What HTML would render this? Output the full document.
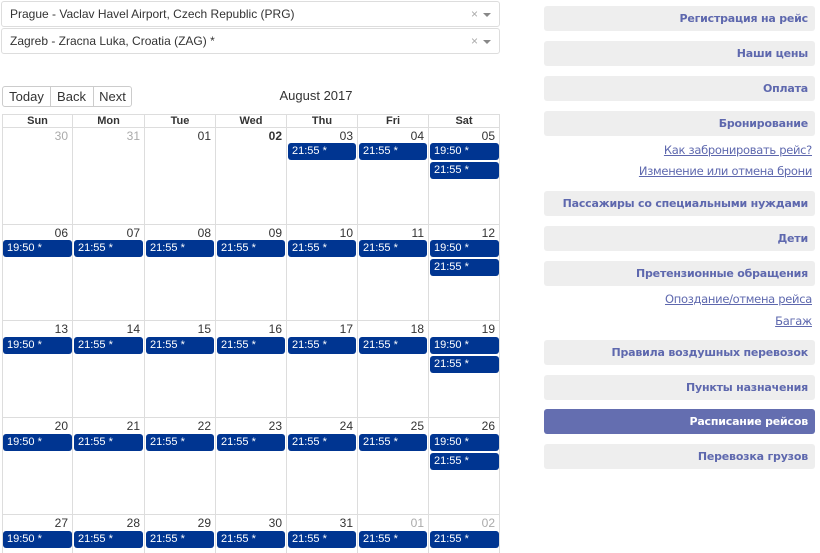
<!DOCTYPE html>
<html><head><meta charset="utf-8"><style>
*{box-sizing:border-box;margin:0;padding:0}
html{width:820px;height:553px;overflow:hidden}
body{width:820px;height:553px;background:#fff;font-family:"Liberation Sans",Arial,sans-serif;position:relative;overflow:hidden;color:#333}
.sel{position:absolute;left:1px;width:499px;height:26px;border:1px solid #ddd;border-radius:3px;font-size:12px;line-height:24px;padding-left:8px;color:#333}
.sel .x{position:absolute;right:21px;top:0;color:#aaa;font-size:12px}
.sel .a{position:absolute;right:8px;top:11px;border-left:4px solid transparent;border-right:4px solid transparent;border-top:4px solid #888}
.tb{position:absolute;top:86px;height:21px;border:1px solid #ccc;font-size:13px;line-height:19px;text-align:center;color:#333}
.title{position:absolute;left:250px;width:132px;top:88px;text-align:center;font-size:13px}
.hd{position:absolute;top:114px;height:14px;font-size:11px;font-weight:bold;text-align:center;line-height:13px;border-right:1px solid #ddd;border-top:1px solid #ddd;border-bottom:1px solid #ddd}
.cell{position:absolute;border-right:1px solid #ddd;border-bottom:1px solid #ddd}
.dn{position:absolute;right:4px;top:1px;font-size:12px;color:#333}
.dn.g{color:#aaa}.dn.b{font-weight:bold}
.ev{position:absolute;height:17px;background:#003591;border-radius:3px;color:#fff;font-size:11px;line-height:17px;padding-left:4px}
.sb{position:absolute;left:544px;width:271px;height:25px;background:#eee;border-radius:3px;text-align:right;padding-right:7px;font-size:11px;font-weight:bold;color:#5e68ae;line-height:25px;font-family:"DejaVu Sans","Liberation Sans",sans-serif;letter-spacing:-0.2px;white-space:nowrap}
.sb.act{background:#646eb0;color:#fff}
.lk{position:absolute;right:8px;font-size:11.5px;color:#5e68ae;text-decoration:underline;font-family:"DejaVu Sans","Liberation Sans",sans-serif;letter-spacing:-0.3px;white-space:nowrap}
</style></head><body>
<div class="sel" style="top:1px">Prague - Vaclav Havel Airport, Czech Republic (PRG)<span class="x">×</span><span class="a"></span></div>
<div class="sel" style="top:28px">Zagreb - Zracna Luka, Croatia (ZAG) *<span class="x">×</span><span class="a"></span></div>
<div class="tb" style="left:2px;width:49px;border-radius:3px 0 0 3px">Today</div>
<div class="tb" style="left:50px;width:44px;border-left:none">Back</div>
<div class="tb" style="left:93px;width:39px;border-radius:0 3px 3px 0">Next</div>
<div class="title">August 2017</div>

<div class="hd" style="left:2px;width:71px;border-left:1px solid #ddd">Sun</div>
<div class="hd" style="left:73px;width:72px">Mon</div>
<div class="hd" style="left:145px;width:71px">Tue</div>
<div class="hd" style="left:216px;width:71px">Wed</div>
<div class="hd" style="left:287px;width:71px">Thu</div>
<div class="hd" style="left:358px;width:71px">Fri</div>
<div class="hd" style="left:429px;width:71px">Sat</div>

<div class="cell" style="left:2px;top:128px;width:71px;height:97px;border-left:1px solid #ddd"><span class="dn g">30</span></div>
<div class="cell" style="left:73px;top:128px;width:72px;height:97px"><span class="dn g">31</span></div>
<div class="cell" style="left:145px;top:128px;width:71px;height:97px"><span class="dn">01</span></div>
<div class="cell" style="left:216px;top:128px;width:71px;height:97px"><span class="dn b">02</span></div>
<div class="cell" style="left:287px;top:128px;width:71px;height:97px"><span class="dn">03</span></div>
<div class="cell" style="left:358px;top:128px;width:71px;height:97px"><span class="dn">04</span></div>
<div class="cell" style="left:429px;top:128px;width:71px;height:97px"><span class="dn">05</span></div>
<div class="ev" style="left:288px;top:143px;width:68px">21:55 *</div>
<div class="ev" style="left:359px;top:143px;width:68px">21:55 *</div>
<div class="ev" style="left:430px;top:143px;width:69px">19:50 *</div>
<div class="ev" style="left:430px;top:162px;width:69px">21:55 *</div>

<div class="cell" style="left:2px;top:225px;width:71px;height:96px;border-left:1px solid #ddd"><span class="dn">06</span></div>
<div class="cell" style="left:73px;top:225px;width:72px;height:96px"><span class="dn">07</span></div>
<div class="cell" style="left:145px;top:225px;width:71px;height:96px"><span class="dn">08</span></div>
<div class="cell" style="left:216px;top:225px;width:71px;height:96px"><span class="dn">09</span></div>
<div class="cell" style="left:287px;top:225px;width:71px;height:96px"><span class="dn">10</span></div>
<div class="cell" style="left:358px;top:225px;width:71px;height:96px"><span class="dn">11</span></div>
<div class="cell" style="left:429px;top:225px;width:71px;height:96px"><span class="dn">12</span></div>
<div class="ev" style="left:3px;top:240px;width:69px">19:50 *</div>
<div class="ev" style="left:74px;top:240px;width:69px">21:55 *</div>
<div class="ev" style="left:146px;top:240px;width:68px">21:55 *</div>
<div class="ev" style="left:217px;top:240px;width:68px">21:55 *</div>
<div class="ev" style="left:288px;top:240px;width:68px">21:55 *</div>
<div class="ev" style="left:359px;top:240px;width:68px">21:55 *</div>
<div class="ev" style="left:430px;top:240px;width:69px">19:50 *</div>
<div class="ev" style="left:430px;top:259px;width:69px">21:55 *</div>

<div class="cell" style="left:2px;top:321px;width:71px;height:97px;border-left:1px solid #ddd"><span class="dn">13</span></div>
<div class="cell" style="left:73px;top:321px;width:72px;height:97px"><span class="dn">14</span></div>
<div class="cell" style="left:145px;top:321px;width:71px;height:97px"><span class="dn">15</span></div>
<div class="cell" style="left:216px;top:321px;width:71px;height:97px"><span class="dn">16</span></div>
<div class="cell" style="left:287px;top:321px;width:71px;height:97px"><span class="dn">17</span></div>
<div class="cell" style="left:358px;top:321px;width:71px;height:97px"><span class="dn">18</span></div>
<div class="cell" style="left:429px;top:321px;width:71px;height:97px"><span class="dn">19</span></div>
<div class="ev" style="left:3px;top:337px;width:69px">19:50 *</div>
<div class="ev" style="left:74px;top:337px;width:69px">21:55 *</div>
<div class="ev" style="left:146px;top:337px;width:68px">21:55 *</div>
<div class="ev" style="left:217px;top:337px;width:68px">21:55 *</div>
<div class="ev" style="left:288px;top:337px;width:68px">21:55 *</div>
<div class="ev" style="left:359px;top:337px;width:68px">21:55 *</div>
<div class="ev" style="left:430px;top:337px;width:69px">19:50 *</div>
<div class="ev" style="left:430px;top:356px;width:69px">21:55 *</div>

<div class="cell" style="left:2px;top:418px;width:71px;height:97px;border-left:1px solid #ddd"><span class="dn">20</span></div>
<div class="cell" style="left:73px;top:418px;width:72px;height:97px"><span class="dn">21</span></div>
<div class="cell" style="left:145px;top:418px;width:71px;height:97px"><span class="dn">22</span></div>
<div class="cell" style="left:216px;top:418px;width:71px;height:97px"><span class="dn">23</span></div>
<div class="cell" style="left:287px;top:418px;width:71px;height:97px"><span class="dn">24</span></div>
<div class="cell" style="left:358px;top:418px;width:71px;height:97px"><span class="dn">25</span></div>
<div class="cell" style="left:429px;top:418px;width:71px;height:97px"><span class="dn">26</span></div>
<div class="ev" style="left:3px;top:434px;width:69px">19:50 *</div>
<div class="ev" style="left:74px;top:434px;width:69px">21:55 *</div>
<div class="ev" style="left:146px;top:434px;width:68px">21:55 *</div>
<div class="ev" style="left:217px;top:434px;width:68px">21:55 *</div>
<div class="ev" style="left:288px;top:434px;width:68px">21:55 *</div>
<div class="ev" style="left:359px;top:434px;width:68px">21:55 *</div>
<div class="ev" style="left:430px;top:434px;width:69px">19:50 *</div>
<div class="ev" style="left:430px;top:453px;width:69px">21:55 *</div>

<div class="cell" style="left:2px;top:515px;width:71px;height:40px;border-left:1px solid #ddd;border-bottom:none"><span class="dn">27</span></div>
<div class="cell" style="left:73px;top:515px;width:72px;height:40px;border-bottom:none"><span class="dn">28</span></div>
<div class="cell" style="left:145px;top:515px;width:71px;height:40px;border-bottom:none"><span class="dn">29</span></div>
<div class="cell" style="left:216px;top:515px;width:71px;height:40px;border-bottom:none"><span class="dn">30</span></div>
<div class="cell" style="left:287px;top:515px;width:71px;height:40px;border-bottom:none"><span class="dn">31</span></div>
<div class="cell" style="left:358px;top:515px;width:71px;height:40px;border-bottom:none"><span class="dn g">01</span></div>
<div class="cell" style="left:429px;top:515px;width:71px;height:40px;border-bottom:none"><span class="dn g">02</span></div>
<div class="ev" style="left:3px;top:531px;width:69px">19:50 *</div>
<div class="ev" style="left:74px;top:531px;width:69px">21:55 *</div>
<div class="ev" style="left:146px;top:531px;width:68px">21:55 *</div>
<div class="ev" style="left:217px;top:531px;width:68px">21:55 *</div>
<div class="ev" style="left:288px;top:531px;width:68px">21:55 *</div>
<div class="ev" style="left:359px;top:531px;width:68px">21:55 *</div>
<div class="ev" style="left:430px;top:531px;width:69px">21:55 *</div>

<div class="sb" style="top:6px">Регистрация на рейс</div>
<div class="sb" style="top:41px">Наши цены</div>
<div class="sb" style="top:76px">Оплата</div>
<div class="sb" style="top:111px">Бронирование</div>
<div class="lk" style="top:143px">Как забронировать рейс?</div>
<div class="lk" style="top:164px">Изменение или отмена брони</div>
<div class="sb" style="top:191px">Пассажиры со специальными нуждами</div>
<div class="sb" style="top:226px">Дети</div>
<div class="sb" style="top:261px">Претензионные обращения</div>
<div class="lk" style="top:292px">Опоздание/отмена рейса</div>
<div class="lk" style="top:314px">Багаж</div>
<div class="sb" style="top:340px">Правила воздушных перевозок</div>
<div class="sb" style="top:375px">Пункты назначения</div>
<div class="sb act" style="top:409px">Расписание рейсов</div>
<div class="sb" style="top:444px">Перевозка грузов</div>
</body></html>
